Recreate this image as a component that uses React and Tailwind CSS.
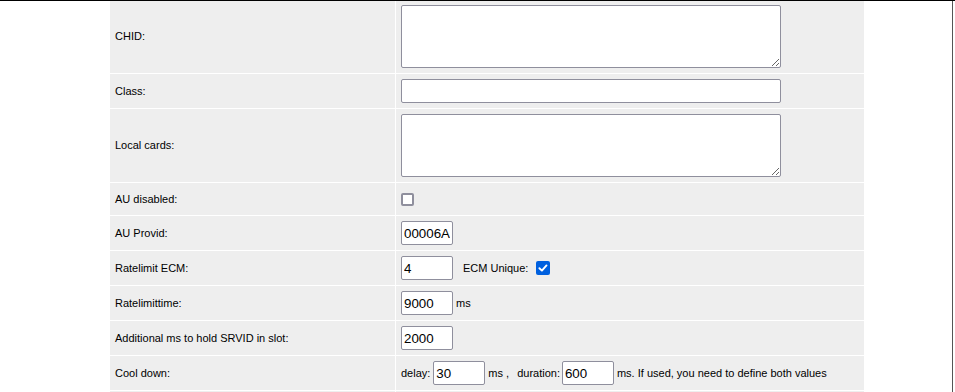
import React from 'react';

const font = "font-['Liberation_Sans',Arial,sans-serif]";

const TextArea = () => <textarea className="block w-[380px] h-[63px] border border-[#8f8f9d] rounded-[2px] bg-white outline-none" />;

const Field = ({ value, w = 'w-[52px]' }) => <input type="text" defaultValue={value} className={`${w} h-[24px] border border-[#8f8f9d] rounded-[2px] bg-white px-[2px] text-[13.33px] text-black outline-none`} />;

const Check = ({ checked }) => checked ? <span className="inline-flex items-center justify-center w-[14px] h-[14px] rounded-[2px] bg-[#0060df]">
      <svg viewBox="0 0 14 14" className="w-[14px] h-[14px]">
        <path d="M3.4 7.2 L5.9 9.6 L10.5 4.4" fill="none" stroke="white" strokeWidth="1.9" strokeLinecap="round" strokeLinejoin="round" />
      </svg>
    </span> : <span className="inline-block w-[13px] h-[13px] rounded-[2px] border-2 border-[#8f8f9d] bg-white" />;

const Row = ({ label, children, pad = 'py-[5px]' }) => <>
    <div className={`bg-[#eeeeee] flex items-center px-[5px] ${pad}`}>{label}</div>
    <div className={`bg-[#eeeeee] flex items-center pl-[5px] ${pad}`}>{children}</div>
  </>;

export default function App() {
  return <div className={`${font} text-[11px] text-black bg-white w-[955px] h-[392px] overflow-hidden border-t border-black`}>
      <div className="w-[953px] h-full border-r border-[#555555]">
        <div className="ml-[110px] w-[754px] grid grid-cols-[285px_468px] gap-px">
          <Row label="CHID:" pad="pt-[4px] pb-[5px]"><TextArea /></Row>
          <Row label="Class:"><Field w="w-[380px]" /></Row>
          <Row label="Local cards:"><TextArea /></Row>
          <Row label="AU disabled:" pad="py-[9px] h-[32px]"><Check /></Row>
          <Row label="AU Provid:"><Field value="00006A" /></Row>
          <Row label="Ratelimit ECM:">
            <Field value="4" />
            <span className="ml-[10px]">ECM Unique:</span>
            <span className="ml-[8px] flex"><Check checked /></span>
          </Row>
          <Row label="Ratelimittime:">
            <Field value="9000" />
            <span className="ml-[3px]">ms</span>
          </Row>
          <Row label="Additional ms to hold SRVID in slot:"><Field value="2000" /></Row>
          <Row label="Cool down:">
            <span>delay:</span>
            <span className="ml-[3px]"><Field value="30" /></span>
            <span className="ml-[3px]">ms ,</span>
            <span className="ml-[8px]">duration:</span>
            <span className="ml-[2px]"><Field value="600" /></span>
            <span className="ml-[3px]">ms. If used, you need to define both values</span>
          </Row>
          <Row label="" />
        </div>
      </div>
    </div>;
}
